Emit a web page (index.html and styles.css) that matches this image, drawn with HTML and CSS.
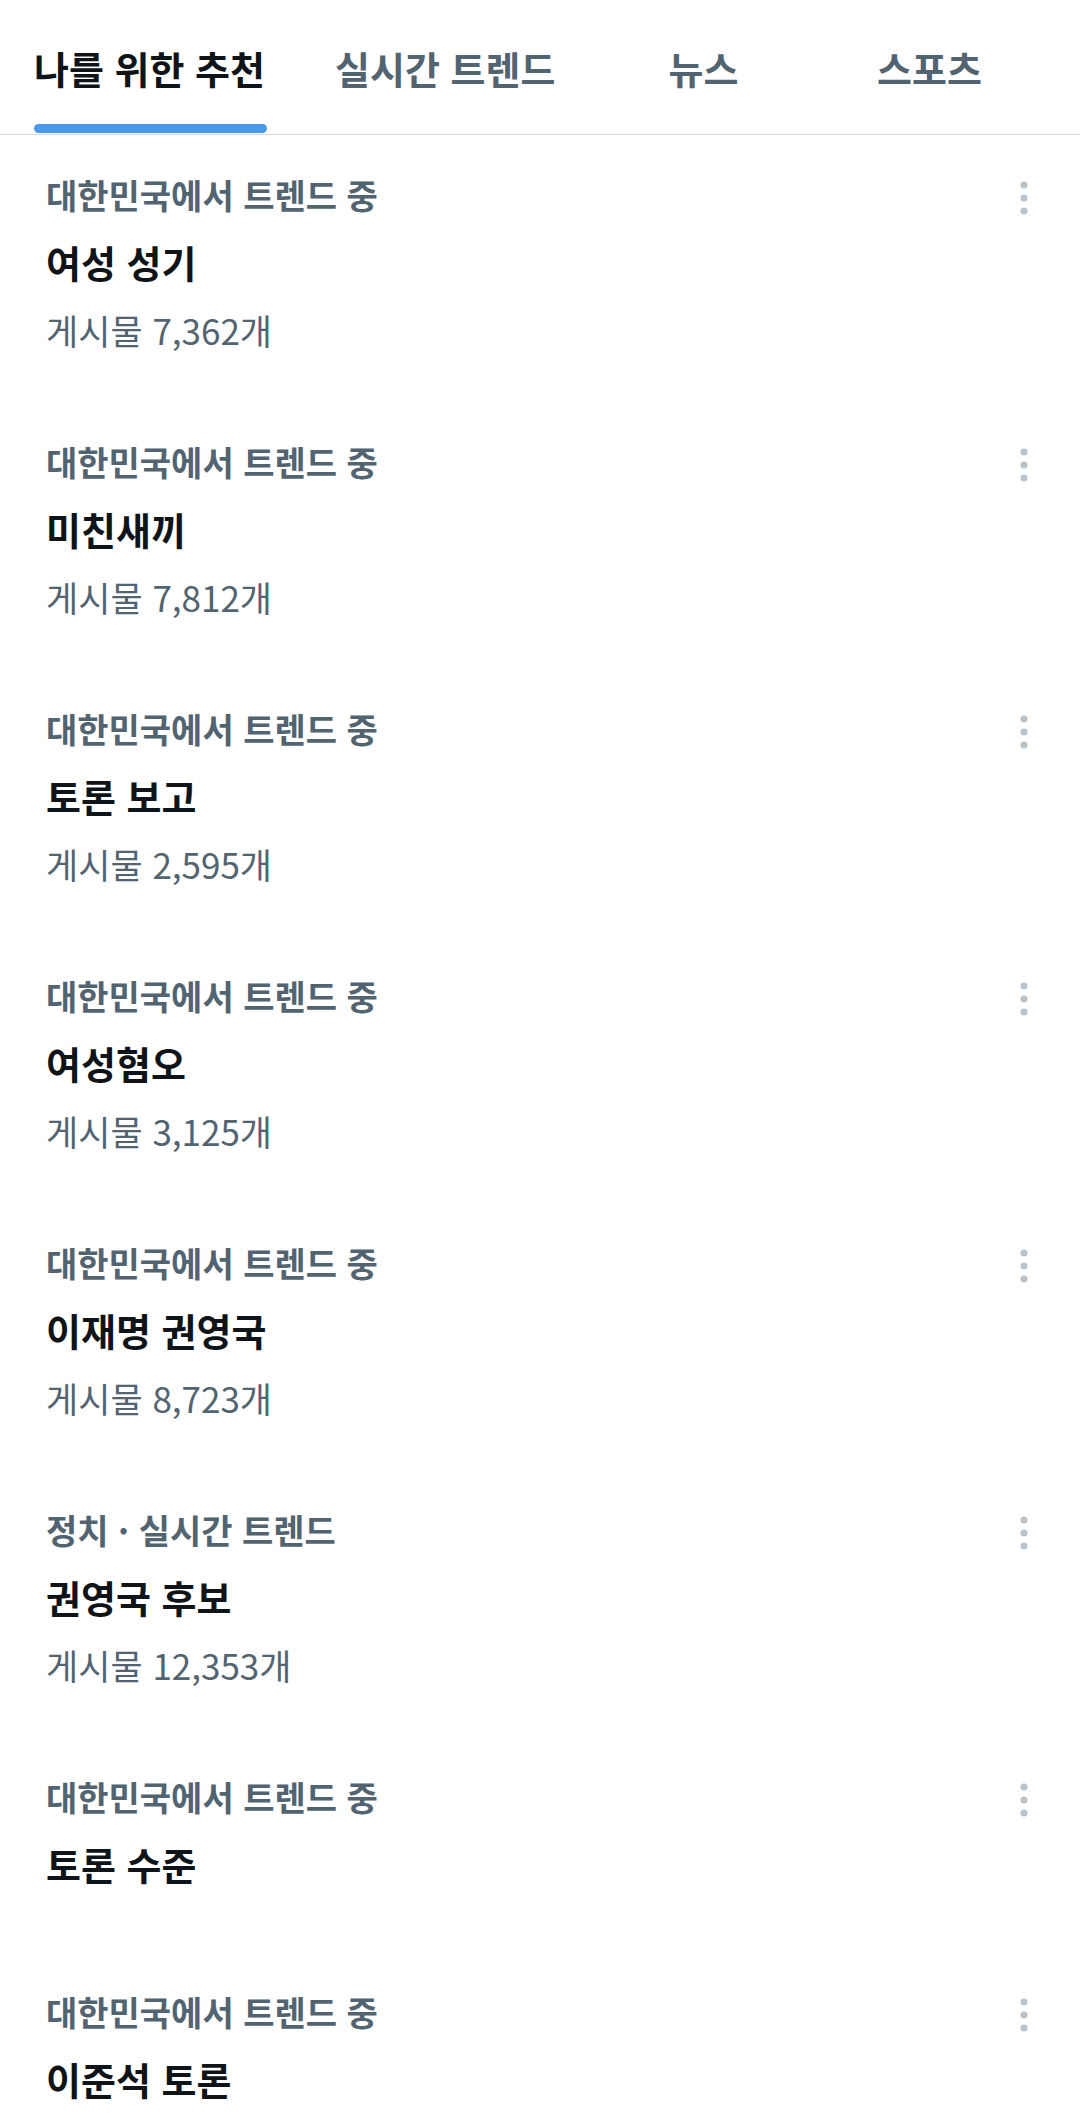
FILE: index.html
```html
<!DOCTYPE html>
<html lang="ko">
<head>
    <meta charset="UTF-8">
    <title>탐색하기</title>
    <link rel="stylesheet" href="styles.css">
</head>
<body>
    <nav class="tabs">
        <div class="tab active"><span class="tab-label">나를 위한 추천</span></div>
        <div class="tab"><span class="tab-label">실시간 트렌드</span></div>
        <div class="tab"><span class="tab-label">뉴스</span></div>
        <div class="tab"><span class="tab-label">스포츠</span></div>
    </nav>

    <div class="trends">
        <div class="trend">
            <div class="trend-meta">대한민국에서 트렌드 중</div>
            <div class="trend-title">여성 성기</div>
            <div class="trend-count">게시물 7,362개</div>
            <svg class="more" width="14" height="40" viewBox="0 0 14 40"><circle cx="7" cy="7" r="3.6"/><circle cx="7" cy="20" r="3.6"/><circle cx="7" cy="33" r="3.6"/></svg>
        </div>
        <div class="trend">
            <div class="trend-meta">대한민국에서 트렌드 중</div>
            <div class="trend-title">미친새끼</div>
            <div class="trend-count">게시물 7,812개</div>
            <svg class="more" width="14" height="40" viewBox="0 0 14 40"><circle cx="7" cy="7" r="3.6"/><circle cx="7" cy="20" r="3.6"/><circle cx="7" cy="33" r="3.6"/></svg>
        </div>
        <div class="trend">
            <div class="trend-meta">대한민국에서 트렌드 중</div>
            <div class="trend-title">토론 보고</div>
            <div class="trend-count">게시물 2,595개</div>
            <svg class="more" width="14" height="40" viewBox="0 0 14 40"><circle cx="7" cy="7" r="3.6"/><circle cx="7" cy="20" r="3.6"/><circle cx="7" cy="33" r="3.6"/></svg>
        </div>
        <div class="trend">
            <div class="trend-meta">대한민국에서 트렌드 중</div>
            <div class="trend-title">여성혐오</div>
            <div class="trend-count">게시물 3,125개</div>
            <svg class="more" width="14" height="40" viewBox="0 0 14 40"><circle cx="7" cy="7" r="3.6"/><circle cx="7" cy="20" r="3.6"/><circle cx="7" cy="33" r="3.6"/></svg>
        </div>
        <div class="trend">
            <div class="trend-meta">대한민국에서 트렌드 중</div>
            <div class="trend-title">이재명 권영국</div>
            <div class="trend-count">게시물 8,723개</div>
            <svg class="more" width="14" height="40" viewBox="0 0 14 40"><circle cx="7" cy="7" r="3.6"/><circle cx="7" cy="20" r="3.6"/><circle cx="7" cy="33" r="3.6"/></svg>
        </div>
        <div class="trend">
            <div class="trend-meta">정치 · 실시간 트렌드</div>
            <div class="trend-title">권영국 후보</div>
            <div class="trend-count">게시물 12,353개</div>
            <svg class="more" width="14" height="40" viewBox="0 0 14 40"><circle cx="7" cy="7" r="3.6"/><circle cx="7" cy="20" r="3.6"/><circle cx="7" cy="33" r="3.6"/></svg>
        </div>
        <div class="trend no-count">
            <div class="trend-meta">대한민국에서 트렌드 중</div>
            <div class="trend-title">토론 수준</div>
            <svg class="more" width="14" height="40" viewBox="0 0 14 40"><circle cx="7" cy="7" r="3.6"/><circle cx="7" cy="20" r="3.6"/><circle cx="7" cy="33" r="3.6"/></svg>
        </div>
        <div class="trend no-count">
            <div class="trend-meta">대한민국에서 트렌드 중</div>
            <div class="trend-title">이준석 토론</div>
            <svg class="more" width="14" height="40" viewBox="0 0 14 40"><circle cx="7" cy="7" r="3.6"/><circle cx="7" cy="20" r="3.6"/><circle cx="7" cy="33" r="3.6"/></svg>
        </div>
    </div>
</body>
</html>
```

FILE: styles.css
```css
body {
    margin: 0;
    padding: 0;
    background-color: #ffffff;
    font-family: "Noto Sans CJK KR", "Noto Sans", sans-serif;
    color: #0f1419;
    overflow: hidden;
}
.tabs {
    display: flex;
    height: 134px;
    border-bottom: 1px solid #d6dadd;
}
.tab {
    flex-shrink: 0;
    min-width: 226px;
    box-sizing: border-box;
    padding: 0 36px 0 34px;
    display: flex;
    justify-content: center;
}
.tab-label {
    position: relative;
    display: flex;
    align-items: center;
    font-size: 38px;
    font-weight: 700;
    color: #536471;
    white-space: nowrap;
}
.tab.active .tab-label {
    color: #0f1419;
}
.tab.active .tab-label::after {
    content: "";
    position: absolute;
    left: 0;
    right: -2px;
    bottom: 1px;
    height: 9px;
    border-radius: 5px;
    background-color: #4a99e9;
}
.trend {
    position: relative;
    padding: 38px 46px 50px;
}
.trend.no-count {
    padding-bottom: 52px;
}
.trend-meta {
    font-size: 34px;
    font-weight: 700;
    line-height: 44px;
    color: #536471;
}
.trend-title {
    margin-top: 9px;
    font-size: 38px;
    font-weight: 700;
    line-height: 72px;
}
.trend-count {
    margin-top: 10px;
    font-size: 35px;
    line-height: 44px;
    color: #536471;
}
.more {
    position: absolute;
    top: 43px;
    right: 49px;
    fill: #b9c4cd;
}
```
